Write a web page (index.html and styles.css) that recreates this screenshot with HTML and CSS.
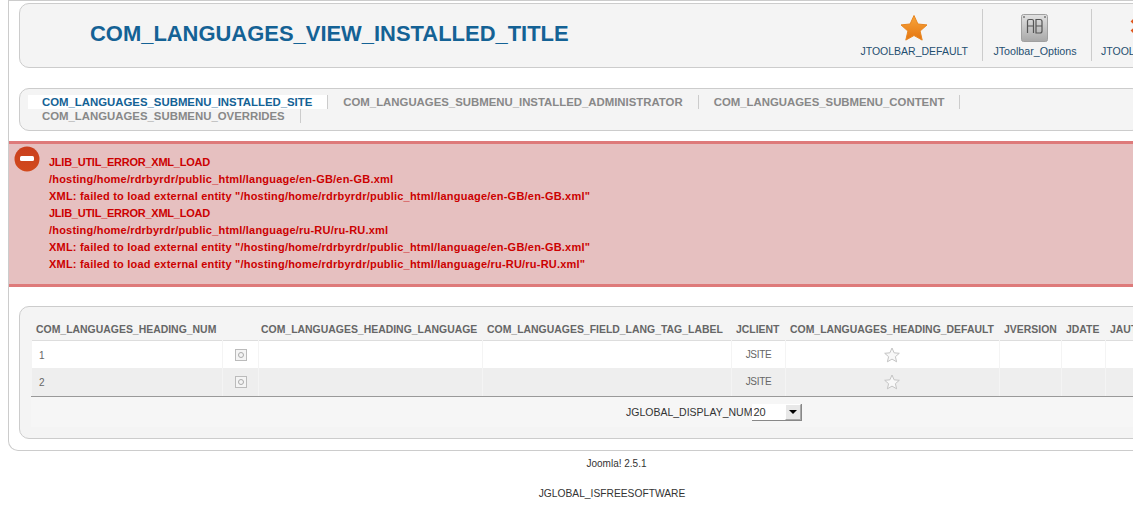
FILE: index.html
```html
<!DOCTYPE html>
<html lang="en">
<head>
<meta charset="utf-8">
<title>Languages</title>
<link rel="stylesheet" href="styles.css">
</head>
<body>
<div class="page">
  <div class="content">
    <header class="toolbar-box">
      <h1 class="title">COM_LANGUAGES_VIEW_INSTALLED_TITLE</h1>
      <ul class="toolbar">
        <li class="tool tool-default">
          <svg class="tool-icon" width="32" height="32" viewBox="0 0 32 32">
            <defs><linearGradient id="starfill" x1="0" y1="0" x2="0" y2="1"><stop offset="0" stop-color="#f8a63c"/><stop offset="1" stop-color="#e4740f"/></linearGradient></defs>
            <path d="M16 3.500l3.900 8.500 9.100.9-6.900 6.200 2.100 9L16 23.500l-8.200 4.600 2.100-9L3 12.900l9.100-.9z" fill="url(#starfill)" stroke="#e8851f" stroke-width="1" stroke-linejoin="round"/>
          </svg>
          <span>JTOOLBAR_DEFAULT</span>
        </li>
        <li class="tool tool-options">
          <svg class="tool-icon" width="32" height="32" viewBox="0 0 32 32">
            <defs><linearGradient id="optfill" x1="0" y1="0" x2="0" y2="1"><stop offset="0" stop-color="#e2e2e2"/><stop offset="1" stop-color="#a8a8a8"/></linearGradient></defs>
            <rect x="3.500" y="1.500" width="26" height="27" rx="2" fill="url(#optfill)" stroke="#a0a0a0"/>
            <circle cx="6" cy="4" r="1" fill="#777"/><circle cx="27" cy="4" r="1" fill="#777"/>
            <path d="M9.500 20V8q0-1.500 1.500-1.500h3q1.500 0 1.500 1.500v12M9.500 13h6M18 6.500h4q2 0 2 2V18q0 2-2 2h-4zM18 13h6" fill="none" stroke="#555" stroke-width="1.200"/>
          </svg>
          <span>JToolbar_Options</span>
        </li>
        <li class="tool tool-third">
          <svg class="tool-icon" width="32" height="32" viewBox="0 0 32 32">
            <path d="M10 8l12 12M22 8L10 20" stroke="#e0561c" stroke-width="4" fill="none"/>
          </svg>
          <span>JTOOLBAR_DELETE</span>
        </li>
      </ul>
    </header>

    <nav class="submenu-box">
      <ul class="submenu">
        <li class="sub-item active">COM_LANGUAGES_SUBMENU_INSTALLED_SITE</li>
        <li class="sub-item">COM_LANGUAGES_SUBMENU_INSTALLED_ADMINISTRATOR</li>
        <li class="sub-item">COM_LANGUAGES_SUBMENU_CONTENT</li>
        <li class="sub-item row-start">COM_LANGUAGES_SUBMENU_OVERRIDES</li>
      </ul>
    </nav>
  </div>

  <section class="message">
    <svg class="message-icon" width="26" height="26" viewBox="0 0 26 26">
      <defs><linearGradient id="errfill" x1="0" y1="0" x2="0" y2="1"><stop offset="0" stop-color="#c93f1e"/><stop offset="1" stop-color="#d24a1c"/></linearGradient></defs>
      <circle cx="13" cy="13" r="12.500" fill="url(#errfill)"/>
      <rect x="6" y="10" width="14" height="5" rx="1.500" fill="#fff"/>
    </svg>
    <ul class="message-list">
      <li class="key">JLIB_UTIL_ERROR_XML_LOAD</li>
      <li>/hosting/home/rdrbyrdr/public_html/language/en-GB/en-GB.xml</li>
      <li>XML: failed to load external entity "/hosting/home/rdrbyrdr/public_html/language/en-GB/en-GB.xml"</li>
      <li class="key">JLIB_UTIL_ERROR_XML_LOAD</li>
      <li>/hosting/home/rdrbyrdr/public_html/language/ru-RU/ru-RU.xml</li>
      <li>XML: failed to load external entity "/hosting/home/rdrbyrdr/public_html/language/en-GB/en-GB.xml"</li>
      <li>XML: failed to load external entity "/hosting/home/rdrbyrdr/public_html/language/ru-RU/ru-RU.xml"</li>
    </ul>
  </section>

  <div class="content">
    <section class="list-box">
      <table class="list">
        <colgroup>
          <col class="c-num"><col class="c-check"><col class="c-lang"><col class="c-tag"><col class="c-client"><col class="c-default"><col class="c-version"><col class="c-date"><col class="c-author">
        </colgroup>
        <thead>
          <tr>
            <th>COM_LANGUAGES_HEADING_NUM</th>
            <th></th>
            <th class="tight">COM_LANGUAGES_HEADING_LANGUAGE</th>
            <th>COM_LANGUAGES_FIELD_LANG_TAG_LABEL</th>
            <th>JCLIENT</th>
            <th>COM_LANGUAGES_HEADING_DEFAULT</th>
            <th>JVERSION</th>
            <th>JDATE</th>
            <th>JAUTHOR</th>
          </tr>
        </thead>
        <tbody>
          <tr>
            <td class="num">1</td>
            <td class="center"><span class="radio"></span></td>
            <td></td><td></td>
            <td class="center">JSITE</td>
            <td class="center"><svg class="star" width="16" height="16" viewBox="0 0 16 16"><path d="M8 1l2.100 4.800 5.200.5-3.900 3.400 1.200 5.100L8 12.100l-4.600 2.700 1.200-5.100L.7 6.300l5.200-.5z" fill="#f8f8f8" stroke="#c4c4c4"/></svg></td>
            <td></td><td></td><td></td>
          </tr>
          <tr class="alt">
            <td>2</td>
            <td class="center"><span class="radio"></span></td>
            <td></td><td></td>
            <td class="center">JSITE</td>
            <td class="center"><svg class="star" width="16" height="16" viewBox="0 0 16 16"><path d="M8 1l2.100 4.800 5.200.5-3.900 3.400 1.200 5.100L8 12.100l-4.600 2.700 1.200-5.100L.7 6.300l5.200-.5z" fill="#f8f8f8" stroke="#c4c4c4"/></svg></td>
            <td></td><td></td><td></td>
          </tr>
        </tbody>
      </table>
      <div class="pager">
        <span class="pager-label">JGLOBAL_DISPLAY_NUM</span><span class="select"><span class="select-value">20</span><span class="select-btn"><span class="select-arrow"></span></span></span>
      </div>
    </section>
  </div>
</div>
<footer class="footer">
  <p class="version">Joomla! 2.5.1</p>
  <p class="free">JGLOBAL_ISFREESOFTWARE</p>
</footer>
</body>
</html>
```
FILE: styles.css
```css
html, body {
  margin: 0;
  padding: 0;
  background: #fff;
  overflow: hidden;
  height: 511px;
  font-family: "Liberation Sans", Arial, sans-serif;
  font-size: 11px;
  color: #333;
}
ul { list-style: none; margin: 0; padding: 0; }
h1, p { margin: 0; }

.page {
  width: 1300px;
  margin-left: 8px;
  box-sizing: border-box;
  height: 451px;
  border: 1px solid #ccc;
  border-right: 0;
  border-radius: 0 0 0 10px;
  padding-top: 2px;
}
.content { padding-left: 10px; }

.toolbar-box {
  display: flex;
  align-items: flex-start;
  box-sizing: border-box;
  height: 65px;
  background: #f4f4f4;
  border: 1px solid #ccc;
  border-radius: 10px;
  margin-bottom: 20px;
  padding-left: 70px;
}
.title {
  flex: none;
  width: 672px;
  margin-top: 16px;
  font-size: 21.95px;
  line-height: 28px;
  font-weight: bold;
  color: #146295;
}
.toolbar { display: flex; padding-top: 5px; }
.tool {
  box-sizing: border-box;
  height: 52px;
  border-right: 1px solid #ccc;
  display: flex;
  flex-direction: column;
  font-size: 10.5px;
  color: #1f4f70;
  white-space: nowrap;
}
.tool-default { width: 221px; padding: 3px 14px 0 0; align-items: flex-end; }
.tool-default .tool-icon { margin-right: 38px; margin-bottom: 1px; }
.tool-options { width: 109px; padding: 4px 14px 0 10px; align-items: center; font-size: 10.7px; }
.tool-options .tool-icon { margin-right: 2px; }
.tool-third { width: 120px; border-right: 0; padding: 3px 0 0 9px; align-items: flex-start; }
.tool-third .tool-icon { margin-left: 21px; margin-bottom: 1px; }
.tool-icon { display: block; flex: none; }

.submenu-box {
  box-sizing: border-box;
  height: 43px;
  width: 1123px;
  background: #f4f4f4;
  border: 1px solid #ccc;
  border-radius: 10px;
  padding: 6px 0 0 8px;
  margin-bottom: 10px;
}
.submenu { display: flex; flex-wrap: wrap; width: 940px; }
.sub-item {
  box-sizing: border-box;
  padding: 0 15px;
  border-right: 1px solid #ccc;
  font-size: 11.39px;
  line-height: 14px;
  font-weight: bold;
  color: #888;
  white-space: nowrap;
}
.sub-item.active { background: #fff; color: #146295; padding-left: 14px; }
.sub-item.row-start { padding-left: 14px; }

.message {
  display: flex;
  box-sizing: border-box;
  height: 146px;
  background: #e6c0c0;
  border-top: 3px solid #de7a7a;
  border-bottom: 3px solid #de7a7a;
  padding: 2px 0 0 5px;
  margin-bottom: 19px;
}
.message-icon { flex: none; margin-right: 9px; }
.message-list {
  padding-top: 8px;
  font-size: 11px;
  line-height: 17px;
  font-weight: bold;
  letter-spacing: .21px;
  color: #c00;
  white-space: nowrap;
}
.message-list .key { letter-spacing: -.25px; }

.list-box {
  box-sizing: border-box;
  height: 133px;
  background: #f4f4f4;
  border: 1px solid #ccc;
  border-radius: 10px;
  padding: 10px 0 0 11px;
}
.list {
  table-layout: fixed;
  border-collapse: separate;
  border-spacing: 1px 0;
  width: 1207px;
  border-bottom: 1px solid #999;
  color: #666;
}
.c-num { width: 190px; }
.c-check { width: 35px; }
.c-lang { width: 223px; }
.c-tag { width: 248px; }
.c-client { width: 53px; }
.c-default { width: 213px; }
.c-version { width: 61px; }
.c-date { width: 43px; }
.c-author { width: 131px; }
.list th {
  height: 22px;
  padding: 1px 0 0 4px;
  background: #f4f4f4;
  border-bottom: 1px solid #ddd;
  text-align: left;
  white-space: nowrap;
  font-size: 10.45px;
  font-weight: bold;
  color: #666;
  overflow: hidden;
}
.list th.tight { padding-left: 2px; }
.list td {
  height: 27px;
  padding: 0 5px 0 7px;
  background: #fff;
  font-size: 10px;
  border-bottom: 1px solid #eee;
}
.list td.num { padding-top: 1px; height: 26px; }
.list tr:last-child td { border-bottom: 0; }
.list .alt td { background: #eee; }
.list td.center { text-align: center; padding: 0; font-size: 10px; letter-spacing: -.3px; }
.list .alt td.center { padding-bottom: 2px; height: 25px; }
.radio {
  display: inline-block;
  box-sizing: border-box;
  width: 12px;
  height: 12px;
  border: 1px solid #bbb;
  background: #f4f4f4;
  vertical-align: middle;
  position: relative;
}
.radio::after {
  content: "";
  position: absolute;
  left: 2px;
  top: 2px;
  width: 4px;
  height: 4px;
  border: 1px solid #aaa;
  border-radius: 50%;
}
.star { vertical-align: middle; margin-right: 1px; }

.pager {
  width: 1207px;
  display: flex;
  align-items: center;
  height: 30px;
  background: #f6f6f6;
  padding-left: 595px;
  box-sizing: border-box;
  font-size: 10.5px;
  color: #333;
}
.select {
  display: flex;
  box-sizing: border-box;
  width: 50px;
  height: 17px;
  background: #fff;
  font-size: 11px;
  line-height: 16px;
  border-right: 1px solid #888;
  border-bottom: 1px solid #888;
}
.select-value { flex: 1; padding-left: 1px; }
.select-btn {
  width: 16px;
  background: #e8e8e8;
  border: 1px solid #fff;
  border-right-color: #aaa;
  border-bottom-color: #aaa;
  display: flex;
  align-items: center;
  justify-content: center;
  box-sizing: border-box;
}
.select-arrow {
  width: 0;
  height: 0;
  border-left: 4px solid transparent;
  border-right: 4px solid transparent;
  border-top: 4px solid #000;
}

.footer { font-size: 10px; color: #333; text-align: center; }
.version { margin: 7px 0 0 100px; line-height: 12px; }
.free { margin: 18px 0 0 91px; line-height: 12px; font-size: 10.25px; }
```
